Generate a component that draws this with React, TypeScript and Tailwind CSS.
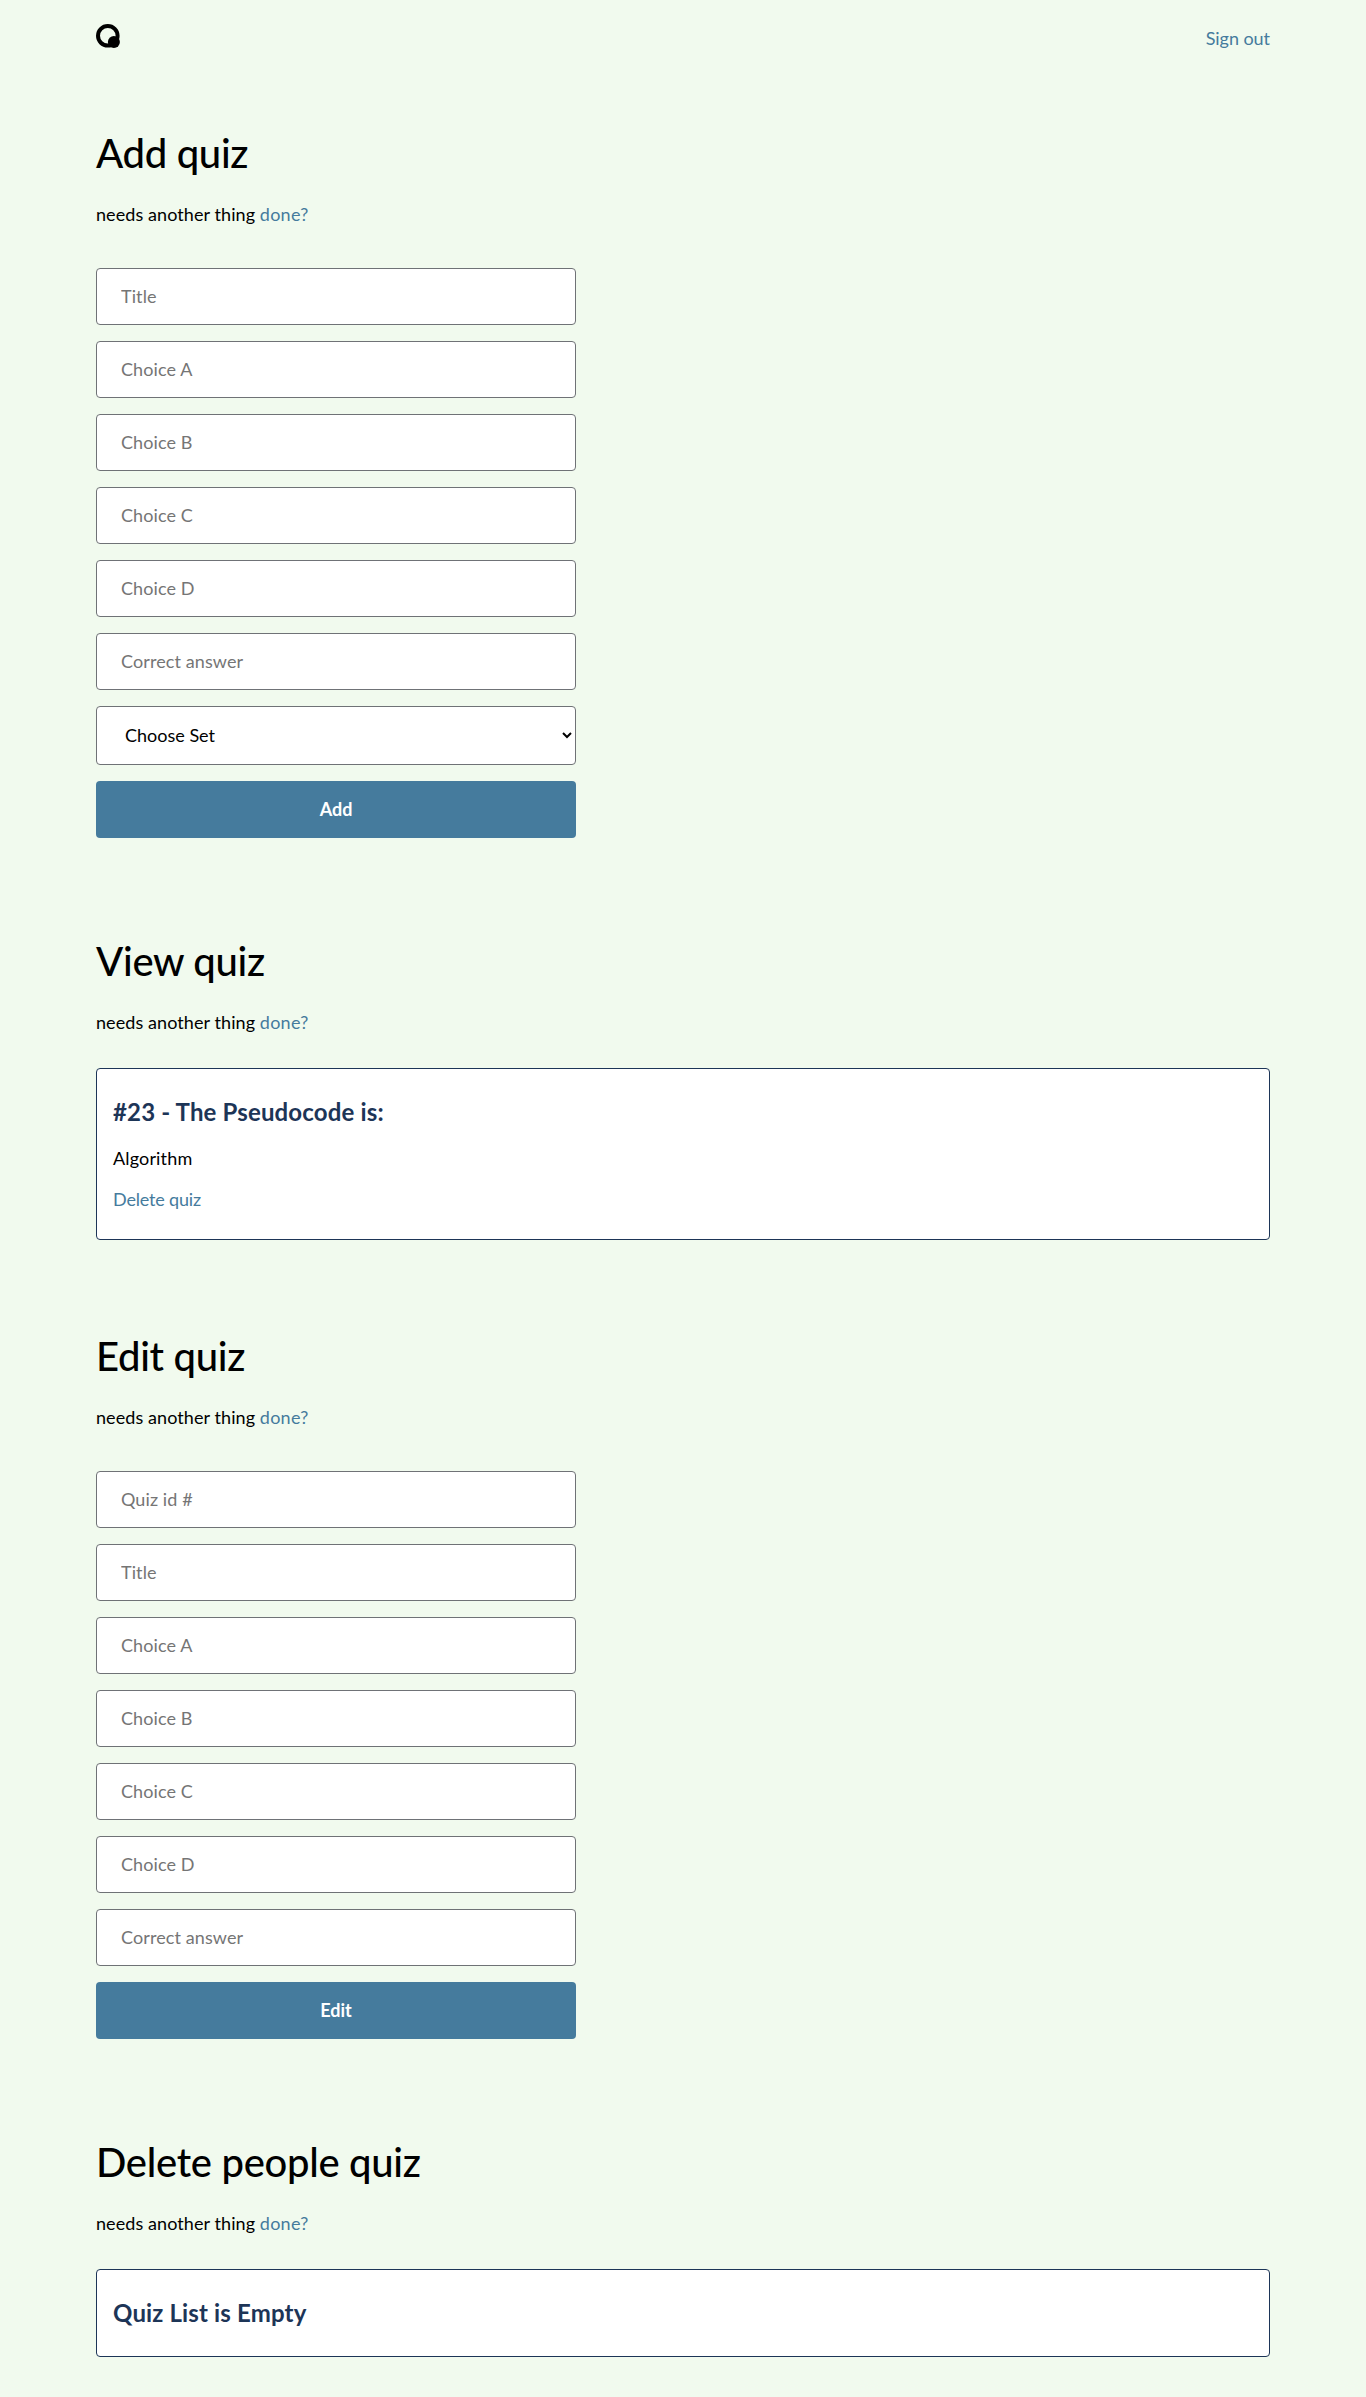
import type { ReactNode } from "react";

const addFields = ["Title", "Choice A", "Choice B", "Choice C", "Choice D", "Correct answer"];
const editFields = ["Quiz id #", ...addFields];

function Logo() {
  return (
    <svg width="24" height="24" viewBox="0 0 24 24" aria-label="Quiz home">
      <circle cx="11.8" cy="11.8" r="9.8" fill="none" stroke="#000" strokeWidth="4" />
      <circle cx="17.9" cy="17.9" r="6" fill="#000" />
    </svg>
  );
}

function Section({ title, className, children }: { title: string; className: string; children: ReactNode }) {
  return (
    <section className={className}>
      <h1 className="text-[40px] font-medium leading-[50px] tracking-[-0.3px]">{title}</h1>
      <p className="mt-6 tracking-[0.08px]">
        needs another thing{" "}
        <a href="#" className="tracking-[0.25px] text-[#457b9d]">
          done?
        </a>
      </p>
      {children}
    </section>
  );
}

function Field({ label }: { label: string }) {
  return (
    <input
      placeholder={label}
      className="block h-[57px] w-full rounded border border-[#6f7276] bg-white px-6 pb-0.5 tracking-[0.1px] placeholder:text-[#757575]"
    />
  );
}

function Submit({ children }: { children: ReactNode }) {
  return (
    <button type="button" className="h-[57px] w-full rounded bg-[#457b9d] pb-0.5 font-bold leading-6 text-white">
      {children}
    </button>
  );
}

function Card({ title, className, children }: { title: string; className: string; children?: ReactNode }) {
  return (
    <article className={`mt-[34px] rounded border border-[#1d3557] bg-white px-4 pt-7 ${className}`}>
      <h2 className="text-2xl font-bold leading-[30px] tracking-[0.15px] text-[#1d3557]">{title}</h2>
      {children}
    </article>
  );
}

export default function App() {
  return (
    <div className="min-h-[2397px] bg-[#f1faee] px-24 pb-10 font-['Lato',sans-serif] text-[18px] leading-6 text-black">
      <header className="flex h-[72px] items-start justify-between pt-6">
        <Logo />
        <a href="#" className="mt-0.5 tracking-[-0.05px] text-[#457b9d]">
          Sign out
        </a>
      </header>
      <main>
        <Section title="Add quiz" className="pt-14">
          <form className="mt-[42px] flex w-[480px] flex-col gap-4">
            {addFields.map((f) => (
              <Field key={f} label={f} />
            ))}
            <select className="h-[59px] w-full rounded border border-[#6f7276] bg-white pb-px pl-6">
              <option>Choose Set</option>
            </select>
            <Submit>Add</Submit>
          </form>
        </Section>
        <Section title="View quiz" className="pt-[98px]">
          <Card title="#23 - The Pseudocode is:" className="h-[172px]">
            <p className="mt-[19px] tracking-[0.15px]">Algorithm</p>
            <a href="#" className="mt-[17px] block tracking-[-0.18px] text-[#457b9d]">
              Delete quiz
            </a>
          </Card>
        </Section>
        <Section title="Edit quiz" className="pt-[91px]">
          <form className="mt-[42px] flex w-[480px] flex-col gap-4">
            {editFields.map((f) => (
              <Field key={f} label={f} />
            ))}
            <Submit>Edit</Submit>
          </form>
        </Section>
        <Section title="Delete people quiz" className="pt-[98px]">
          <Card title="Quiz List is Empty" className="h-[88px]" />
        </Section>
      </main>
    </div>
  );
}
